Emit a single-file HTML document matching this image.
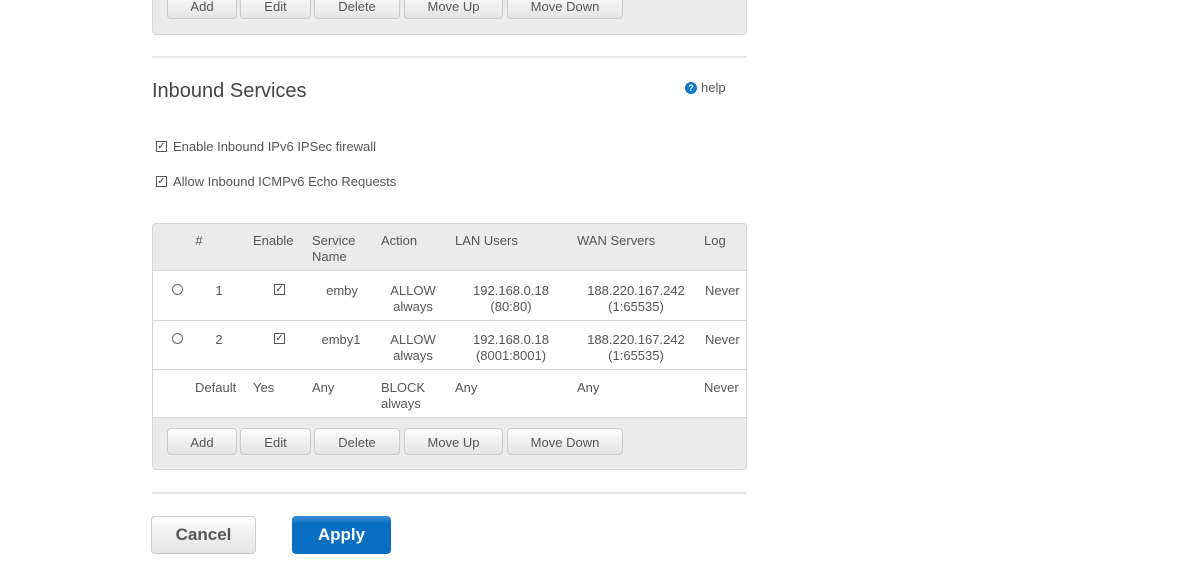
<!DOCTYPE html>
<html><head><style>
body{margin:0;width:1200px;height:573px;background:#fff;font-family:"Liberation Sans",sans-serif;color:#555;font-size:13px;position:relative;overflow:hidden}
.a{position:absolute;white-space:nowrap;line-height:16px}
.c{transform:translateX(-50%);text-align:center}
.box{position:absolute;border:1px solid #d6d6d6;border-radius:4px;background:#ebebeb}
.btn{position:absolute;height:27px;border:1px solid #ccc;border-radius:4px;background:linear-gradient(#fff 0,#f5f5f5 30%,#e4e4e4);text-align:center;line-height:27px;font-size:13px;color:#555;box-sizing:border-box}
.hr{position:absolute;left:152px;width:594px;height:2px;background:#e6e6e6}
.cb{position:absolute;width:9px;height:9px;border:1px solid #555;font-size:10px;line-height:9px;text-align:center;color:#333}
.rd{position:absolute;width:9px;height:9px;border:1px solid #666;border-radius:50%}
</style></head><body>
<div class="box" style="left:152px;top:-10px;width:593px;height:43px"></div>
<div class="btn" style="left:167px;top:-8px;width:70px">Add</div>
<div class="btn" style="left:240px;top:-8px;width:71px">Edit</div>
<div class="btn" style="left:314px;top:-8px;width:86px">Delete</div>
<div class="btn" style="left:404px;top:-8px;width:99px">Move Up</div>
<div class="btn" style="left:507px;top:-8px;width:116px">Move Down</div>
<div class="hr" style="top:56px"></div>
<div class="a" style="left:152px;top:79px;font-size:20px;line-height:24px;color:#444">Inbound Services</div>
<div class="a" style="left:685px;top:82px;width:12px;height:12px;border-radius:50%;background:#0b79c9;color:#fff;font-size:9px;line-height:12px;text-align:center;font-weight:bold">?</div>
<div class="a" style="left:701px;top:80px">help</div>
<div class="cb" style="left:156px;top:141px">✓</div>
<div class="a" style="left:173px;top:139px">Enable Inbound IPv6 IPSec firewall</div>
<div class="cb" style="left:156px;top:176px">✓</div>
<div class="a" style="left:173px;top:174px">Allow Inbound ICMPv6 Echo Requests</div>

<div class="box" style="left:152px;top:223px;width:593px;height:245px"></div>
<div style="position:absolute;left:153px;top:270px;width:593px;height:146px;background:#fff;border-top:1px solid #d6d6d6;border-bottom:1px solid #d6d6d6"></div>
<div class="hr" style="top:320px;height:1px;left:153px;width:593px;background:#d6d6d6"></div>
<div class="hr" style="top:369px;height:1px;left:153px;width:593px;background:#d6d6d6"></div>

<div class="a c" style="left:199px;top:233px">#</div>
<div class="a" style="left:253px;top:233px">Enable</div>
<div class="a" style="left:312px;top:233px">Service<br>Name</div>
<div class="a" style="left:381px;top:233px">Action</div>
<div class="a" style="left:455px;top:233px">LAN Users</div>
<div class="a" style="left:577px;top:233px">WAN Servers</div>
<div class="a" style="left:704px;top:233px">Log</div>

<div class="rd" style="left:172px;top:284px"></div>
<div class="a c" style="left:219px;top:283px">1</div>
<div class="cb" style="left:274px;top:284px">✓</div>
<div class="a c" style="left:342px;top:283px">emby</div>
<div class="a c" style="left:413px;top:283px">ALLOW<br>always</div>
<div class="a c" style="left:511px;top:283px">192.168.0.18<br>(80:80)</div>
<div class="a c" style="left:636px;top:283px">188.220.167.242<br>(1:65535)</div>
<div class="a" style="left:705px;top:283px">Never</div>

<div class="rd" style="left:172px;top:333px"></div>
<div class="a c" style="left:219px;top:332px">2</div>
<div class="cb" style="left:274px;top:333px">✓</div>
<div class="a c" style="left:341px;top:332px">emby1</div>
<div class="a c" style="left:413px;top:332px">ALLOW<br>always</div>
<div class="a c" style="left:511px;top:332px">192.168.0.18<br>(8001:8001)</div>
<div class="a c" style="left:636px;top:332px">188.220.167.242<br>(1:65535)</div>
<div class="a" style="left:705px;top:332px">Never</div>

<div class="a" style="left:195px;top:380px">Default</div>
<div class="a" style="left:253px;top:380px">Yes</div>
<div class="a" style="left:312px;top:380px">Any</div>
<div class="a" style="left:381px;top:380px">BLOCK<br>always</div>
<div class="a" style="left:455px;top:380px">Any</div>
<div class="a" style="left:577px;top:380px">Any</div>
<div class="a" style="left:704px;top:380px">Never</div>

<div class="btn" style="left:167px;top:428px;width:70px">Add</div>
<div class="btn" style="left:240px;top:428px;width:71px">Edit</div>
<div class="btn" style="left:314px;top:428px;width:86px">Delete</div>
<div class="btn" style="left:404px;top:428px;width:99px">Move Up</div>
<div class="btn" style="left:507px;top:428px;width:116px">Move Down</div>

<div class="hr" style="top:492px"></div>
<div class="btn" style="left:151px;top:516px;width:105px;height:38px;line-height:36px;font-size:17px;font-weight:bold;color:#555">Cancel</div>
<div class="btn" style="left:292px;top:516px;width:99px;height:38px;line-height:38px;font-size:17px;font-weight:bold;color:#fff;border:none;background:linear-gradient(#3a8fd6 0,#0a6fc2 20%,#0a6fc2)">Apply</div>
</body></html>
